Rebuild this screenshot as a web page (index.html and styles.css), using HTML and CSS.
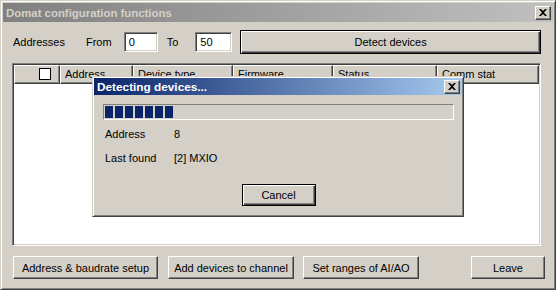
FILE: index.html
```html
<!DOCTYPE html>
<html>
<head>
<meta charset="utf-8">
<link rel="stylesheet" href="styles.css">
</head>
<body>
<div class="window">
  <div class="titlebar inactive">
    <span class="title">Domat configuration functions</span>
    <div class="tclose"><svg width="8" height="7" viewBox="0 0 8 7"><path d="M0 0h2l2 2 2-2h2L5 3.5 8 7H6L4 5 2 7H0l3-3.5z" fill="#000"/></svg></div>
  </div>
  <div class="content">
    <div class="addr-row">
      <span class="lbl l-addr">Addresses</span>
      <span class="lbl l-from">From</span>
      <div class="field f-from">0</div>
      <span class="lbl l-to">To</span>
      <div class="field f-to">50</div>
      <div class="btn default detect">Detect devices</div>
    </div>
    <div class="list">
      <div class="list-head">
        <div class="hcell c0"><span class="chk"></span></div>
        <div class="hcell c1">Address</div>
        <div class="hcell c2">Device type</div>
        <div class="hcell c3">Firmware</div>
        <div class="hcell c4">Status</div>
        <div class="hcell c5">Comm stat</div>
      </div>
      <div class="list-body"></div>
    </div>
    <div class="btn-row">
      <div class="btn b-setup">Address &amp; baudrate setup</div>
      <div class="btn b-add">Add devices to channel</div>
      <div class="btn b-ranges">Set ranges of AI/AO</div>
      <div class="btn b-leave">Leave</div>
    </div>
  </div>
  <div class="dialog">
    <div class="titlebar active">
      <span class="title">Detecting devices...</span>
      <div class="tclose"><svg width="8" height="7" viewBox="0 0 8 7"><path d="M0 0h2l2 2 2-2h2L5 3.5 8 7H6L4 5 2 7H0l3-3.5z" fill="#000"/></svg></div>
    </div>
    <div class="dlg-body">
      <div class="progress">
        <span class="blk"></span><span class="blk"></span><span class="blk"></span><span class="blk"></span><span class="blk"></span><span class="blk"></span><span class="blk"></span>
      </div>
      <div class="info r1"><span class="k">Address</span><span class="v">8</span></div>
      <div class="info r2"><span class="k">Last found</span><span class="v">[2] MXIO</span></div>
      <div class="btn default cancel">Cancel</div>
    </div>
  </div>
</div>
</body>
</html>
```
FILE: styles.css
```css
* { box-sizing: border-box; }
html, body { margin: 0; padding: 0; background: #d4d0c8; }
body {
  font-family: "Liberation Sans", Arial, sans-serif;
  font-size: 11px;
  color: #000;
}
.window {
  position: relative;
  width: 556px;
  height: 290px;
  background: #d4d0c8;
  border: 1px solid;
  border-color: #d4d0c8 #404040 #404040 #d4d0c8;
  box-shadow: inset 1px 1px #fff, inset -1px -1px #808080;
  padding: 2px 2px 2px 2px;
  display: flex;
  flex-direction: column;
}
.titlebar {
  display: flex;
  align-items: center;
  height: 19px;
  padding-left: 3px;
  padding-right: 2px;
  flex: none;
}
.titlebar.inactive {
  background: linear-gradient(to right, #808080, #c0c0c0);
  color: #d4d0c8;
}
.titlebar.active {
  background: linear-gradient(to right, #0a246a, #a6caf0);
  color: #fff;
  height: 17px;
}
.title {
  font-weight: bold;
  font-size: 11.4px;
  flex: 1;
  white-space: nowrap;
}
.active .title { font-size: 11.8px; }
.tclose {
  width: 16px;
  height: 14px;
  background: #d4d0c8;
  border: 1px solid;
  border-color: #fff #404040 #404040 #fff;
  box-shadow: inset -1px -1px #808080;
  display: flex;
  align-items: center;
  justify-content: center;
}
.content {
  flex: 1;
  display: flex;
  flex-direction: column;
  padding: 8px 8px 8px 9px;
  min-height: 0;
}
.addr-row {
  display: flex;
  align-items: center;
  height: 24px;
  margin-right: 4px;
  flex: none;
}
.lbl { white-space: nowrap; }
.l-addr { margin-left: 1px; }
.l-from { margin-left: 21px; }
.field {
  height: 20px;
  background: #fff;
  border: 1px solid;
  border-color: #808080 #fff #fff #808080;
  box-shadow: inset 1px 1px #404040, inset -1px -1px #d4d0c8;
  padding: 3px 0 0 4px;
  line-height: 13px;
}
.f-from { width: 34px; margin-left: 12px; }
.l-to { margin-left: 9px; }
.f-to { width: 37px; margin-left: 17px; }
.btn {
  display: flex;
  align-items: center;
  justify-content: center;
  background: #d4d0c8;
  border: 1px solid;
  border-color: #fff #404040 #404040 #fff;
  box-shadow: inset -1px -1px #808080, inset 1px 1px #d4d0c8;
  white-space: nowrap;
}
.btn.default {
  border: 1px solid #000;
  box-shadow: inset 1px 1px #fff, inset -1px -1px #404040, inset -2px -2px #808080;
}
.detect {
  flex: 1;
  height: 24px;
  margin-left: 8px;
}
.list {
  flex: 1;
  margin-top: 9px;
  margin-right: 4px;
  margin-left: 0;
  display: flex;
  flex-direction: column;
  background: #fff;
  border: 1px solid;
  border-color: #808080 #fff #fff #808080;
  box-shadow: inset 1px 1px #404040, inset -1px -1px #d4d0c8;
  padding: 1px;
  min-height: 0;
}
.list-head {
  display: flex;
  height: 19px;
  flex: none;
}
.hcell {
  height: 19px;
  background: #d4d0c8;
  border: 1px solid;
  border-color: #fff #404040 #404040 #fff;
  box-shadow: inset -1px -1px #808080;
  padding: 2px 0 0 4px;
  line-height: 13px;
  white-space: nowrap;
  overflow: hidden;
}
.c0 { width: 46px; display: flex; justify-content: flex-end; padding: 2px 8px 0 0; }
.c1 { width: 73px; }
.c2 { width: 100px; }
.c3 { width: 100px; }
.c4 { width: 104px; }
.c5 { flex: 1; }
.chk {
  display: block;
  width: 12px;
  height: 12px;
  background: #fff;
  border: 1px solid #000;
}
.list-body { flex: 1; background: #fff; }
.btn-row {
  display: flex;
  margin-top: 10px;
  margin-left: 1px;
  height: 23px;
  flex: none;
}
.btn-row .btn { height: 23px; }
.b-setup { width: 145px; }
.b-add { width: 126px; margin-left: 10px; }
.b-ranges { width: 116px; margin-left: 9px; }
.b-leave { width: 74px; margin-left: auto; }
.dialog {
  position: absolute;
  left: 91px;
  top: 75px;
  width: 372px;
  height: 141px;
  background: #d4d0c8;
  border: 1px solid;
  border-color: #d4d0c8 #404040 #404040 #d4d0c8;
  box-shadow: inset 1px 1px #fff, inset -1px -1px #808080;
  padding: 1px;
  display: flex;
  flex-direction: column;
}
.dlg-body {
  flex: 1;
  padding: 9px 8px 0 9px;
  display: flex;
  flex-direction: column;
}
.progress {
  height: 16px;
  border: 1px solid;
  border-color: #808080 #fff #fff #808080;
  padding: 1px;
  display: flex;
  gap: 2px;
}
.blk {
  width: 8px;
  height: 12px;
  background: #0a246a;
}
.info {
  display: flex;
  height: 14px;
  line-height: 14px;
  padding-left: 2px;
}
.r1 { margin-top: 7px; }
.r2 { margin-top: 10px; }
.k { width: 69px; }
.cancel {
  align-self: center;
  width: 74px;
  height: 22px;
  margin-top: 19px;
}
```
